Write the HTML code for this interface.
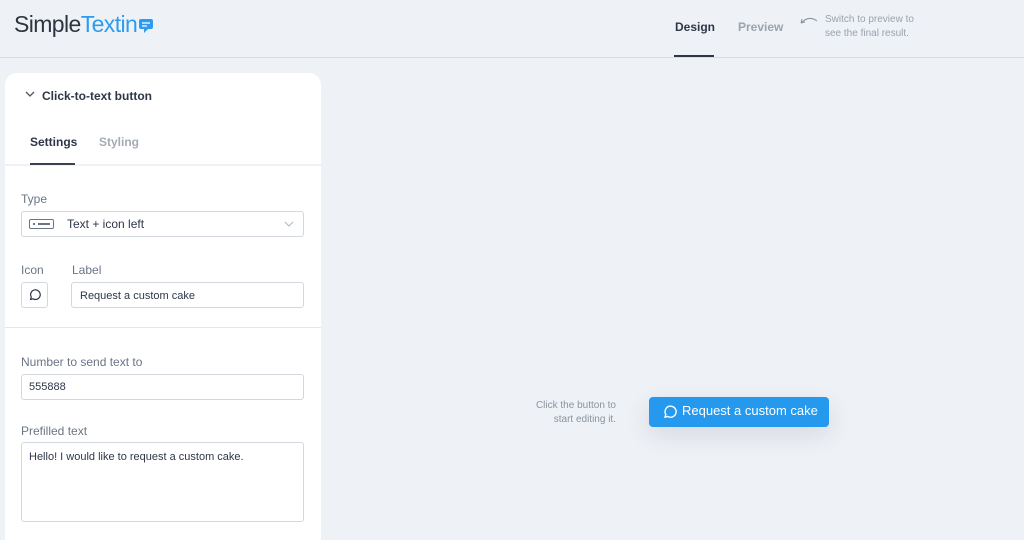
<!DOCTYPE html>
<html style="width:1024px;height:540px;overflow:hidden"><head><style>
*{box-sizing:border-box;margin:0;padding:0}
body{width:1024px;height:540px;overflow:hidden;background:#eef1f5;font-family:"Liberation Sans",sans-serif;position:relative;color:#2d3748}
.a{position:absolute}
.hdr{left:0;top:0;width:1024px;height:58px;border-bottom:1px solid #d8dde3}
.logo{left:14px;top:11px;font-size:23px;letter-spacing:-0.6px;color:#2e3440}
.logo span{color:#2d9cf0}
.panel{left:5px;top:73px;width:316px;height:467px;background:#fff;border-radius:12px 12px 0 0}
.lbl{font-size:12px;color:#6b7585}
.inp{border:1px solid #d3d8de;border-radius:3px;background:#fff;font-size:11px;color:#2d3748}
</style></head><body>
<div class="a hdr"></div>
<div class="a logo">Simple<span>Textin</span></div>
<svg class="a" style="left:139px;top:18px" width="14" height="16" viewBox="0 0 14 16"><path d="M2 1h10a2 2 0 0 1 2 2v6a2 2 0 0 1-2 2H9l-4 4v-4H2a2 2 0 0 1-2-2V3a2 2 0 0 1 2-2z" fill="#2d9cf0"/><path d="M3 5h8M3 8h5" stroke="#fff" stroke-width="1.3"/></svg>
<div class="a" style="left:675px;top:20px;font-size:12px;font-weight:bold;color:#2d3748">Design</div>
<div class="a" style="left:674px;top:55px;width:40px;height:2px;background:#2d3748"></div>
<div class="a" style="left:738px;top:20px;font-size:12px;font-weight:bold;color:#9aa3ae">Preview</div>
<svg class="a" style="left:799px;top:15px" width="20" height="10" viewBox="0 0 20 10"><path d="M2 8Q10 0 18 6M2 8l1-4M2 8l4-1" stroke="#8a94a0" fill="none" stroke-width="1"/></svg>
<div class="a" style="left:825px;top:13px;font-size:10px;line-height:14px;color:#9aa3ae">Switch to preview to<br>see the final result.</div>

<div class="a panel"></div>
<svg class="a" style="left:25px;top:91px" width="10" height="7" viewBox="0 0 10 7"><path d="M1 1l4 4 4-4" stroke="#4a5563" fill="none" stroke-width="1.3"/></svg>
<div class="a" style="left:42px;top:89px;font-size:12px;font-weight:bold;color:#2d3748">Click-to-text button</div>
<div class="a" style="left:30px;top:135px;font-size:12px;font-weight:bold;color:#2d3748">Settings</div>
<div class="a" style="left:99px;top:135px;font-size:12px;font-weight:bold;color:#a4abb5">Styling</div>
<div class="a" style="left:5px;top:164px;width:316px;height:2px;background:#eef1f5"></div>
<div class="a" style="left:30px;top:163px;width:45px;height:2px;background:#3a4250"></div>

<div class="a lbl" style="left:21px;top:192px">Type</div>
<div class="a inp" style="left:21px;top:211px;width:283px;height:26px"></div>
<div class="a" style="left:29px;top:219px;width:25px;height:10px;border:1px solid #6b7585;border-radius:2px"></div>
<div class="a" style="left:33px;top:223px;width:2px;height:2px;background:#6b7585"></div>
<div class="a" style="left:38px;top:223px;width:12px;height:1.5px;background:#6b7585"></div>
<div class="a" style="left:67px;top:217px;font-size:12px;color:#2d3748">Text + icon left</div>
<svg class="a" style="left:284px;top:221px" width="10" height="6" viewBox="0 0 10 6"><path d="M1 1l4 4 4-4" stroke="#b0b7c0" fill="none"/></svg>

<div class="a lbl" style="left:21px;top:263px">Icon</div>
<div class="a lbl" style="left:72px;top:263px">Label</div>
<div class="a inp" style="left:21px;top:282px;width:27px;height:26px"></div>
<svg class="a" style="left:28px;top:288px" width="13" height="13" viewBox="0 0 13 13"><path d="M2.5 11.5l.8-2.4A4.8 4.8 0 1 1 5 10.8z" stroke="#2d3748" fill="none" stroke-width="1.2" stroke-linejoin="round"/></svg>
<div class="a inp" style="left:71px;top:282px;width:233px;height:26px;padding:7px 8px">Request a custom cake</div>
<div class="a" style="left:5px;top:327px;width:316px;height:1px;background:#e3e7ec"></div>

<div class="a lbl" style="left:21px;top:355px">Number to send text to</div>
<div class="a inp" style="left:21px;top:374px;width:283px;height:26px;padding:6px 7px">555888</div>
<div class="a lbl" style="left:21px;top:424px">Prefilled text</div>
<div class="a inp" style="left:21px;top:442px;width:283px;height:80px;padding:8px 7px">Hello! I would like to request a custom cake.</div>

<div class="a" style="left:520px;top:399px;width:96px;text-align:right;font-size:10px;line-height:14px;color:#8a94a0">Click the button to start editing it.</div>
<div class="a" style="left:649px;top:397px;width:180px;height:30px;background:#2499ee;border-radius:4px;box-shadow:0 8px 24px rgba(40,60,90,0.12)"></div>
<svg class="a" style="left:662px;top:404px" width="15" height="15" viewBox="0 0 13 13"><path d="M2.5 11.5l.8-2.4A4.8 4.8 0 1 1 5 10.8z" stroke="#fff" fill="none" stroke-width="1.2" stroke-linejoin="round"/></svg>
<div class="a" style="left:682px;top:403px;font-size:13px;color:#fff">Request a custom cake</div>
</body></html>
